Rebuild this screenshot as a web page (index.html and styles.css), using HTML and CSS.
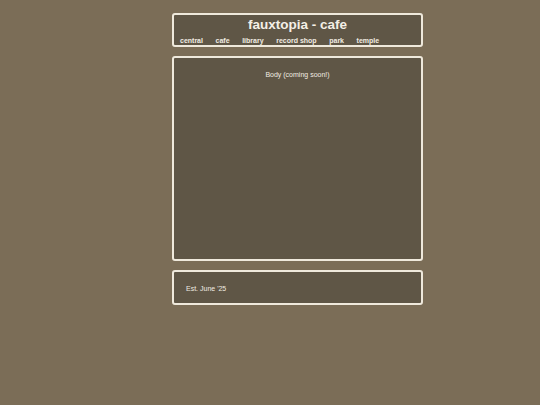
FILE: index.html
```html
<!DOCTYPE html>
<html>
<head>
<meta charset="utf-8">
<link rel="stylesheet" href="styles.css">
</head>
<body>
<div class="page">
  <header class="box header">
    <h1 class="title">fauxtopia - cafe</h1>
    <nav class="nav">
      <span class="link">central</span>
      <span class="link">cafe</span>
      <span class="link">library</span>
      <span class="link">record shop</span>
      <span class="link">park</span>
      <span class="link">temple</span>
    </nav>
  </header>
  <main class="box body">
    <p class="coming">Body (coming soon!)</p>
  </main>
  <footer class="box footer">
    <p class="est">Est. June '25</p>
  </footer>
</div>
</body>
</html>
```
FILE: styles.css
```css
html, body {
  margin: 0;
  padding: 0;
  background: #7b6d57;
  font-family: "Liberation Sans", Arial, sans-serif;
  color: #f1ece2;
}
.page {
  width: 251px;
  margin: 13px 0 0 172px;
  display: flex;
  flex-direction: column;
  gap: 9px;
}
.box {
  box-sizing: border-box;
  background: #5f5646;
  border: 2px solid #efe9dc;
  border-radius: 3px;
}
.header {
  height: 34px;
  padding: 1px 6px 0;
}
.title {
  margin: 0;
  text-align: center;
  font-size: 13.5px;
  line-height: 18px;
  font-weight: bold;
  color: #f4efe6;
}
.nav {
  display: flex;
  gap: 12.6px;
  margin-top: 1px;
  font-size: 7px;
  font-weight: bold;
  line-height: 11px;
}
.link {
  color: #f1ece2;
}
.body {
  height: 205px;
  padding-top: 12px;
}
.coming {
  margin: 0;
  text-align: center;
  font-size: 7px;
  line-height: 9px;
}
.footer {
  height: 35px;
  padding: 12px 12px 0;
}
.est {
  margin: 0;
  font-size: 7px;
  line-height: 9px;
}
```
